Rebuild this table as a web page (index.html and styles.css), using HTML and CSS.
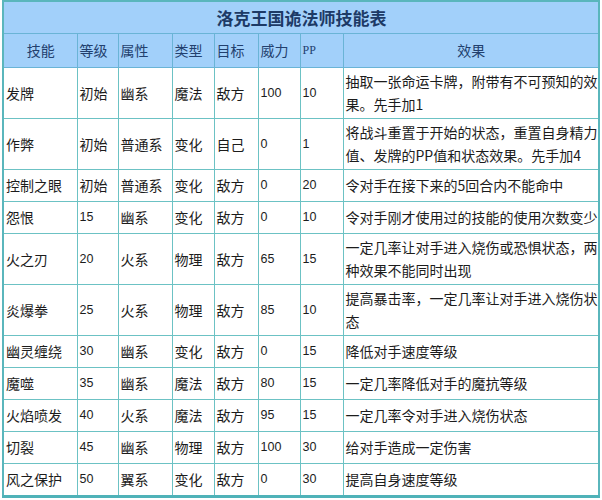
FILE: index.html
```html
<!DOCTYPE html>
<html lang="zh-CN">
<head>
<meta charset="utf-8">
<title>洛克王国诡法师技能表</title>
<link rel="stylesheet" href="styles.css">
</head>
<body>
<div class="wrap">
<table class="skills">
  <colgroup>
    <col class="c-name"><col class="c-lv"><col class="c-attr"><col class="c-type"><col class="c-tgt"><col class="c-pow"><col class="c-pp"><col class="c-eff">
  </colgroup>
  <thead>
    <tr class="title-row"><th colspan="8">洛克王国诡法师技能表</th></tr>
    <tr class="head-row">
      <th class="center">技能</th><th>等级</th><th>属性</th><th>类型</th><th>目标</th><th>威力</th><th class="pp">PP</th><th class="center">效果</th>
    </tr>
  </thead>
  <tbody>
    <tr><td>发牌</td><td>初始</td><td>幽系</td><td>魔法</td><td>敌方</td><td class="num">100</td><td class="num">10</td><td class="eff">抽取一张命运卡牌，附带有不可预知的效<br>果。先手加1</td></tr>
    <tr><td>作弊</td><td>初始</td><td>普通系</td><td>变化</td><td>自己</td><td class="num">0</td><td class="num">1</td><td class="eff">将战斗重置于开始的状态，重置自身精力<br>值、发牌的PP值和状态效果。先手加4</td></tr>
    <tr><td>控制之眼</td><td>初始</td><td>普通系</td><td>变化</td><td>敌方</td><td class="num">0</td><td class="num">20</td><td class="eff">令对手在接下来的5回合内不能命中</td></tr>
    <tr><td>怨恨</td><td class="num">15</td><td>幽系</td><td>变化</td><td>敌方</td><td class="num">0</td><td class="num">10</td><td class="eff">令对手刚才使用过的技能的使用次数变少</td></tr>
    <tr><td>火之刃</td><td class="num">20</td><td>火系</td><td>物理</td><td>敌方</td><td class="num">65</td><td class="num">15</td><td class="eff">一定几率让对手进入烧伤或恐惧状态，两<br>种效果不能同时出现</td></tr>
    <tr><td>炎爆拳</td><td class="num">25</td><td>火系</td><td>物理</td><td>敌方</td><td class="num">85</td><td class="num">10</td><td class="eff">提高暴击率，一定几率让对手进入烧伤状<br>态</td></tr>
    <tr><td>幽灵缠绕</td><td class="num">30</td><td>幽系</td><td>变化</td><td>敌方</td><td class="num">0</td><td class="num">15</td><td class="eff">降低对手速度等级</td></tr>
    <tr><td>魔噬</td><td class="num">35</td><td>幽系</td><td>魔法</td><td>敌方</td><td class="num">80</td><td class="num">15</td><td class="eff">一定几率降低对手的魔抗等级</td></tr>
    <tr><td>火焰喷发</td><td class="num">40</td><td>火系</td><td>魔法</td><td>敌方</td><td class="num">95</td><td class="num">15</td><td class="eff">一定几率令对手进入烧伤状态</td></tr>
    <tr><td>切裂</td><td class="num">45</td><td>幽系</td><td>物理</td><td>敌方</td><td class="num">100</td><td class="num">30</td><td class="eff">给对手造成一定伤害</td></tr>
    <tr><td>风之保护</td><td class="num">50</td><td>翼系</td><td>变化</td><td>敌方</td><td class="num">0</td><td class="num">30</td><td class="eff">提高自身速度等级</td></tr>
  </tbody>
</table>
</div>
</body>
</html>
```
FILE: styles.css
```css
html, body {
  margin: 0;
  padding: 0;
  background: #ffffff;
}

.wrap {
  padding: 0 0 0 2px;
}

.skills {
  width: 596px;
  table-layout: fixed;
  border-collapse: collapse;
  border: 2px solid #5ab6bc;
  border-bottom: 3px solid #4fb2b8;
  font-family: "Noto Sans CJK SC", "Liberation Sans", sans-serif;
  font-size: 14px;
  color: #1c1c1c;
}

.c-name { width: 74px; }
.c-lv { width: 41px; }
.c-attr { width: 54px; }
.c-type { width: 42px; }
.c-tgt { width: 44px; }
.c-pow { width: 42px; }
.c-pp { width: 43px; }
.c-eff { width: 256px; }

.skills th,
.skills td {
  border: 1px solid #6cc2c4;
  padding: 2px 1px 2px 2px;
  text-align: left;
  vertical-align: middle;
  line-height: 23px;
  font-weight: normal;
}

.skills td.eff {
  white-space: nowrap;
  padding-right: 0;
  overflow: hidden;
}

.title-row th {
  background: #a2d0fa;
  color: #1d3a66;
  font-size: 17px;
  font-weight: bold;
  text-align: center;
  height: 27px;
  border-color: #6ab4d6;
}

.head-row th {
  background: #a2d0fa;
  color: #22406e;
  height: 29px;
  border-color: #6ab4d6;
}

.head-row th.center {
  text-align: center;
}

.head-row th.pp {
  font-family: "Liberation Serif", serif;
  font-size: 12px;
}

.skills tbody td {
  height: 27px;
}

.skills td.num {
  font-family: "Liberation Sans", sans-serif;
  font-size: 12.5px;
}
```
